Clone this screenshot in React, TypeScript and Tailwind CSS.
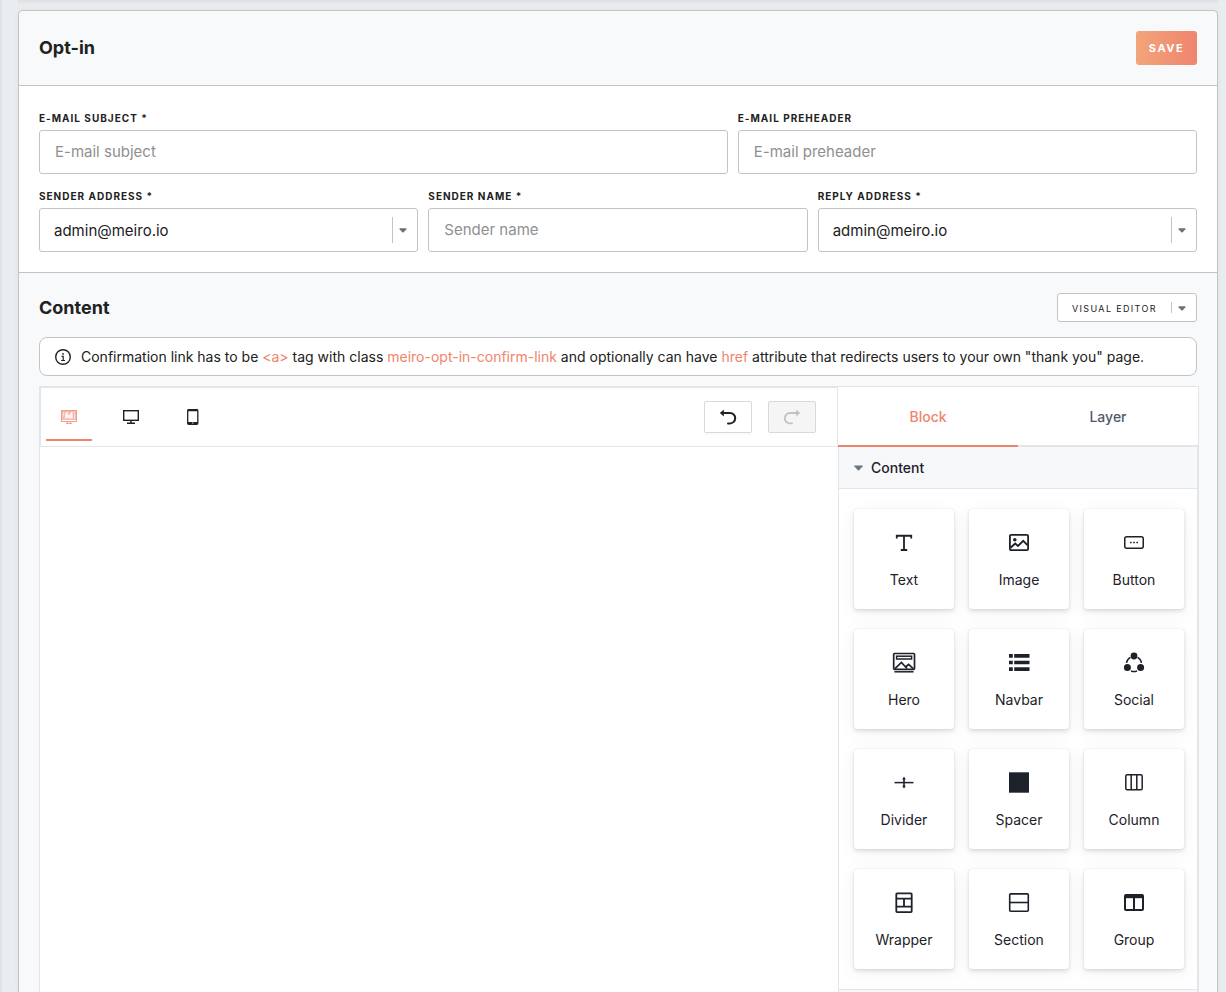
import { useState } from 'react';
import type { ReactNode } from 'react';

const SENDERS = ['admin@meiro.io'];

function Icon({ children }: { children: ReactNode }) {
  return (
    <svg width="24" height="24" viewBox="0 0 24 24" fill="none" stroke="currentColor" strokeWidth="1.5" aria-hidden="true">
      {children}
    </svg>
  );
}

const BLOCKS: { name: string; icon: ReactNode }[] = [
  {
    name: 'Text',
    icon: <path d="M4.75 7.5V4.75h14.5V7.5M12 4.75v14M8.8 19h6.4" strokeWidth="1.8" />,
  },
  {
    name: 'Image',
    icon: (
      <>
        <rect x="2.9" y="3.9" width="18.2" height="15.2" rx="1.2" strokeWidth="1.8" />
        <circle cx="7.8" cy="8.8" r="1.8" fill="currentColor" stroke="none" />
        <path d="M3.5 16.8 8.2 12.6 11 15 16.2 9.8 20.5 14.2" strokeWidth="1.9" />
      </>
    ),
  },
  {
    name: 'Button',
    icon: (
      <>
        <rect x="2.75" y="5.75" width="18.5" height="11.5" rx="2" />
        <path d="M8 11.5h1.6M11.2 11.5h1.6M14.4 11.5H16" />
      </>
    ),
  },
  {
    name: 'Hero',
    icon: (
      <>
        <rect x="1.7" y="2.5" width="20.8" height="15.8" rx="0.8" strokeWidth="1.7" />
        <rect x="4.6" y="5.2" width="15" height="2.8" strokeWidth="1.5" />
        <path d="m3 17.6 6.4-6.1 5.6 6M13.6 16l3-2.6 4.6 4.2" strokeWidth="1.7" />
        <path d="M2.4 20.8h19.2" strokeWidth="1.5" />
      </>
    ),
  },
  {
    name: 'Navbar',
    icon: (
      <path
        d="M2 3h3.8v3.7H2zM7.2 3h15.3v3.7H7.2zM2 9.7h3.8v3.6H2zM7.2 9.7h15.3v3.6H7.2zM2 16.2h3.8v3.7H2zM7.2 16.2h15.3v3.7H7.2z"
        fill="currentColor"
        stroke="none"
      />
    ),
  },
  {
    name: 'Social',
    icon: (
      <>
        <g fill="currentColor" stroke="none">
          <circle cx="12" cy="5" r="3.4" />
          <circle cx="5.4" cy="16.4" r="3.5" />
          <circle cx="18.6" cy="16.4" r="3.5" />
        </g>
        <path d="M8.4 6.4a7.8 7.8 0 0 0-3.9 5.4M15.6 6.4a7.8 7.8 0 0 1 3.9 5.4M9 20a8 8 0 0 0 6 0" />
      </>
    ),
  },
  {
    name: 'Divider',
    icon: (
      <>
        <path d="M2.5 11.6h19" strokeWidth="1.5" />
        <path d="M12 6.8v9.4" strokeWidth="1.6" />
        <path d="m10.2 8.4 1.8-2.6 1.8 2.6zM10.2 14.8l1.8 2.6 1.8-2.6z" fill="currentColor" stroke="none" />
      </>
    ),
  },
  {
    name: 'Spacer',
    icon: <path d="M2 1.3h20v20.4H2z" fill="currentColor" stroke="none" />,
  },
  {
    name: 'Column',
    icon: (
      <>
        <rect x="3.8" y="3.8" width="16.4" height="15" rx="1.4" />
        <path d="M9.2 4v15M14.8 4v15" />
      </>
    ),
  },
  {
    name: 'Wrapper',
    icon: (
      <>
        <rect x="4.3" y="2.3" width="15.4" height="18.8" rx="0.8" strokeWidth="1.8" />
        <path d="M4 7.7h16M4 15.7h16M12 7.7v8" strokeWidth="1.8" />
      </>
    ),
  },
  {
    name: 'Section',
    icon: (
      <>
        <rect x="2.7" y="2.9" width="18.6" height="17.4" rx="1" strokeWidth="1.6" />
        <path d="M2.7 11.5h18.6" strokeWidth="1.6" />
      </>
    ),
  },
  {
    name: 'Group',
    icon: (
      <>
        <rect x="3" y="3.9" width="18" height="15.2" rx="1" strokeWidth="2" />
        <path d="M3 5.4h18" strokeWidth="3.6" />
        <path d="M12 5v14" strokeWidth="2" />
      </>
    ),
  },
];

const DEVICES: { name: string; icon: ReactNode }[] = [
  {
    name: 'Edit',
    icon: (
      <>
        <rect x="0.5" y="1.5" width="15" height="11" fill="currentColor" fillOpacity="0.55" stroke="currentColor" strokeOpacity="0.75" />
        <path d="M1 11.5h14" stroke="white" />
        <path d="M4.2 4.5 6 3h1.4l-.8 2 1.6 1.6L9.6 4l1-1h1v6.5H8.2L6.8 8.4l-.6 1.1H4.2z" fill="white" fillOpacity="0.85" />
        <path d="M2.5 3.5v4M13.5 3v1M13.5 5.5v4" stroke="white" strokeOpacity="0.55" />
        <path d="M6.5 13v1.5M9.5 13v1.5M5 14.5h6" stroke="currentColor" strokeOpacity="0.7" />
      </>
    ),
  },
  {
    name: 'Desktop',
    icon: (
      <>
        <rect x="0.7" y="1.7" width="14.6" height="9.6" stroke="currentColor" strokeWidth="1.4" />
        <path d="M8 11.5v2.2M4 14.3h8" stroke="currentColor" strokeWidth="1.5" />
      </>
    ),
  },
  {
    name: 'Mobile',
    icon: (
      <>
        <rect x="2.7" y="0.7" width="10.1" height="14.6" rx="1" stroke="currentColor" strokeWidth="1.3" />
        <path d="M2.7 1.2h10M2.7 14h10" stroke="currentColor" strokeWidth="2.2" />
        <path d="M7.2 14h1.2" stroke="white" />
      </>
    ),
  },
];

function Caret() {
  return (
    <svg width="8" height="5" viewBox="0 0 8 5" fill="currentColor" aria-hidden="true">
      <path d="M1 .3h6q.8.2.4.9L4.7 4.2q-.7.6-1.4 0L.6 1.2Q.2.5 1 .3z" />
    </svg>
  );
}

function Field({ id, label, children }: { id: string; label: string; children: ReactNode }) {
  return (
    <div className="flex min-w-0 flex-col gap-1.5">
      <label htmlFor={id} className="text-[10px] leading-3 font-bold tracking-[1px] uppercase">
        {label}
      </label>
      {children}
    </div>
  );
}

function TextField({ id, label, placeholder }: { id: string; label: string; placeholder: string }) {
  return (
    <Field id={id} label={label}>
      <input
        id={id}
        type="text"
        placeholder={placeholder}
        className="h-11 w-full rounded-[3px] border border-[#c4c4c4] bg-white px-[15px] pb-0.5 text-[15px] placeholder:text-[#8f8f8f] focus:outline-none"
      />
    </Field>
  );
}

function AddressField({ id, label }: { id: string; label: string }) {
  return (
    <Field id={id} label={label}>
      <div className="relative">
        <select
          id={id}
          className="h-11 w-full appearance-none rounded-[3px] border border-[#c4c4c4] bg-white pt-0.5 pr-8 pl-3.5 text-[15px] focus:outline-none"
        >
          {SENDERS.map((sender) => (
            <option key={sender}>{sender}</option>
          ))}
        </select>
        <span className="pointer-events-none absolute inset-y-[9px] right-[11px] flex items-center border-l border-[#c4c4c4] pt-px pl-1.5 text-[#707070]">
          <Caret />
        </span>
      </div>
    </Field>
  );
}

export default function App() {
  const [device, setDevice] = useState('Edit');
  const [tab, setTab] = useState('Block');

  return (
    <div className="flex min-h-screen flex-col bg-[#e9edf0] pr-2 pl-[18px] font-['Inter',sans-serif] text-[#212121] shadow-[inset_3px_0_3px_-2px_#d8dce0]">
      {/* bottom edge of the card above */}
      <div className="h-2.5 shadow-[inset_0_4px_4px_-3px_#d3d7db]" />

      <div className="flex flex-1 flex-col rounded-t-[5px] border border-b-0 border-[#c4c4c4] bg-[#f8f9fb] shadow-[0_0_5px_rgba(0,0,0,0.05)]">
        <header className="flex items-center justify-between border-b border-[#c4c4c4] p-5">
          <h1 className="text-lg leading-6 font-bold">Opt-in</h1>
          <button
            type="button"
            className="h-[34px] w-[61px] rounded-[3px] bg-linear-to-r from-[#f2a57b] to-[#ef846d] text-[11px] font-bold tracking-[1.5px] text-white"
          >
            SAVE
          </button>
        </header>

        <form className="flex flex-col gap-4 border-b border-[#c4c4c4] bg-white px-5 pt-[26px] pb-5">
          <div className="grid grid-cols-[3fr_2fr] gap-2.5">
            <TextField id="subject" label="E-mail subject *" placeholder="E-mail subject" />
            <TextField id="preheader" label="E-mail preheader" placeholder="E-mail preheader" />
          </div>
          <div className="grid grid-cols-3 gap-2.5">
            <AddressField id="sender-address" label="Sender address *" />
            <TextField id="sender-name" label="Sender name *" placeholder="Sender name" />
            <AddressField id="reply-address" label="Reply address *" />
          </div>
        </form>

        <section className="flex flex-1 flex-col pt-5 pr-[18px] pl-5">
          <div className="flex items-center justify-between pr-0.5">
            <h2 className="text-lg leading-7 font-bold">Content</h2>
            <div className="relative">
              <select
                aria-label="Editor type"
                className="block h-[29px] w-[140px] appearance-none rounded-[3px] border border-[#c4c4c4] bg-white pt-0.5 pl-3.5 text-[9px] tracking-[0.15em] focus:outline-none"
              >
                <option>VISUAL EDITOR</option>
              </select>
              <span className="pointer-events-none absolute inset-y-[9px] right-[11px] flex items-center border-l border-[#c4c4c4] pt-px pl-1.5 text-[#707070]">
                <Caret />
              </span>
            </div>
          </div>

          <div className="mt-[15px] mr-0.5 flex h-[39px] items-center gap-2.5 rounded-[8px] border border-[#c4c4c4] bg-white px-[15px]">
            <svg width="16" height="16" viewBox="0 0 16 16" fill="none" stroke="currentColor" aria-hidden="true">
              <circle cx="8" cy="8" r="7.3" strokeWidth="1.4" />
              <path d="M6.5 7.4h1.7v4M6.2 11.5h3.8" strokeWidth="1.2" />
              <circle cx="8" cy="4.9" r="0.9" fill="currentColor" stroke="none" />
            </svg>
            <p className="text-[14px] leading-5">
              Confirmation link has to be <span className="text-[#ef846d]">&lt;a&gt;</span> tag with class{' '}
              <span className="text-[#ef846d]">meiro-opt-in-confirm-link</span> and optionally can have{' '}
              <span className="text-[#ef846d]">href</span> attribute that redirects users to your own "thank you" page.
            </p>
          </div>

          <div className="mt-2.5 flex flex-1">
            {/* Canvas */}
            <div className="flex flex-1 flex-col border-l border-[#e4e5ea] bg-white">
              <div className="flex h-[61px] items-center justify-between border-x border-t-2 border-b border-[#e4e5ea] pr-[21px] pl-[5px]">
                <div className="flex gap-4 self-stretch pb-[5px]">
                  {DEVICES.map(({ name, icon }) => (
                    <button
                      key={name}
                      type="button"
                      aria-label={name}
                      onClick={() => setDevice(name)}
                      className={`flex w-[46px] items-center justify-center border-b-2 pt-1.5 ${
                        device === name ? 'border-[#ef846d] text-[#ef846d]' : 'border-transparent'
                      }`}
                    >
                      <svg width="16" height="16" viewBox="0 0 16 16" fill="none" aria-hidden="true">
                        {icon}
                      </svg>
                    </button>
                  ))}
                </div>
                <div className="flex gap-4">
                  <button
                    type="button"
                    aria-label="Undo"
                    className="flex h-8 w-12 items-center justify-center rounded-[2px] border border-[#d9d9d9] bg-white shadow-[0_2px_0_rgba(0,0,0,0.02)]"
                  >
                    <svg width="18" height="18" viewBox="0 0 18 18" fill="none" stroke="currentColor" strokeWidth="2" aria-hidden="true">
                      <path d="M3 5h8a5 5 0 0 1 0 10.4H9" strokeLinecap="round" />
                      <path d="M4.8 1.6v6.8L.9 5z" fill="currentColor" stroke="none" />
                    </svg>
                  </button>
                  <button
                    type="button"
                    aria-label="Redo"
                    disabled
                    className="flex h-8 w-12 items-center justify-center rounded-[2px] border border-[#d9d9d9] bg-[#f5f5f5] text-[#c2c2c2]"
                  >
                    <svg width="18" height="18" viewBox="0 0 18 18" fill="none" stroke="currentColor" strokeWidth="1.8" aria-hidden="true">
                      <path d="M15 5H7a5 5 0 0 0 0 10.4h2" strokeLinecap="round" />
                      <path d="M13.2 1.6v6.8L17.1 5z" fill="currentColor" stroke="none" />
                    </svg>
                  </button>
                </div>
              </div>
            </div>

            {/* Side panel */}
            <div className="flex w-[361px] flex-col border-r border-[#e4e5ea] bg-white">
              <div className="grid h-[61px] grid-cols-2 border-t border-[#e4e5ea] text-[14px] font-medium">
                {['Block', 'Layer'].map((name) => (
                  <button
                    key={name}
                    type="button"
                    onClick={() => setTab(name)}
                    className={`border-b-2 ${
                      tab === name ? 'border-[#ef846d] text-[#ef846d]' : 'border-[#e4e5ea] text-[#4e5969]'
                    }`}
                  >
                    {name}
                  </button>
                ))}
              </div>
              <div className="flex flex-1 flex-col border-x border-[#e4e5ea] text-[#1d2129]">
                <button
                  type="button"
                  className="flex h-[42px] items-center gap-2 border-b border-[#e4e5ea] bg-[#f7f8fa] px-[15px] text-[14px] font-medium"
                >
                  <svg width="9" height="6" viewBox="0 0 9 6" fill="#6b7785" aria-hidden="true">
                    <path d="M.3.4h8.4v.8L4.9 5.6h-.8L.3 1.2z" />
                  </svg>
                  Content
                </button>
                <div className="grid grid-cols-[repeat(3,100px)] gap-x-[15px] gap-y-5 py-5 pl-[15px]">
                  {BLOCKS.map(({ name, icon }) => (
                    <button
                      key={name}
                      type="button"
                      className="flex h-[100px] cursor-grab flex-col items-center gap-[15px] rounded-[3px] bg-white pt-[22px] text-[14px] leading-5 shadow-[0_0_1px_rgba(0,0,0,0.16),0_2px_4px_rgba(0,0,0,0.12),0_4px_20px_rgba(0,0,0,0.05)]"
                    >
                      <Icon>{icon}</Icon>
                      {name}
                    </button>
                  ))}
                </div>
                <div className="flex-1 border-t border-[#e4e5ea] bg-[#f7f8fa]" />
              </div>
            </div>
          </div>
        </section>
      </div>
    </div>
  );
}
